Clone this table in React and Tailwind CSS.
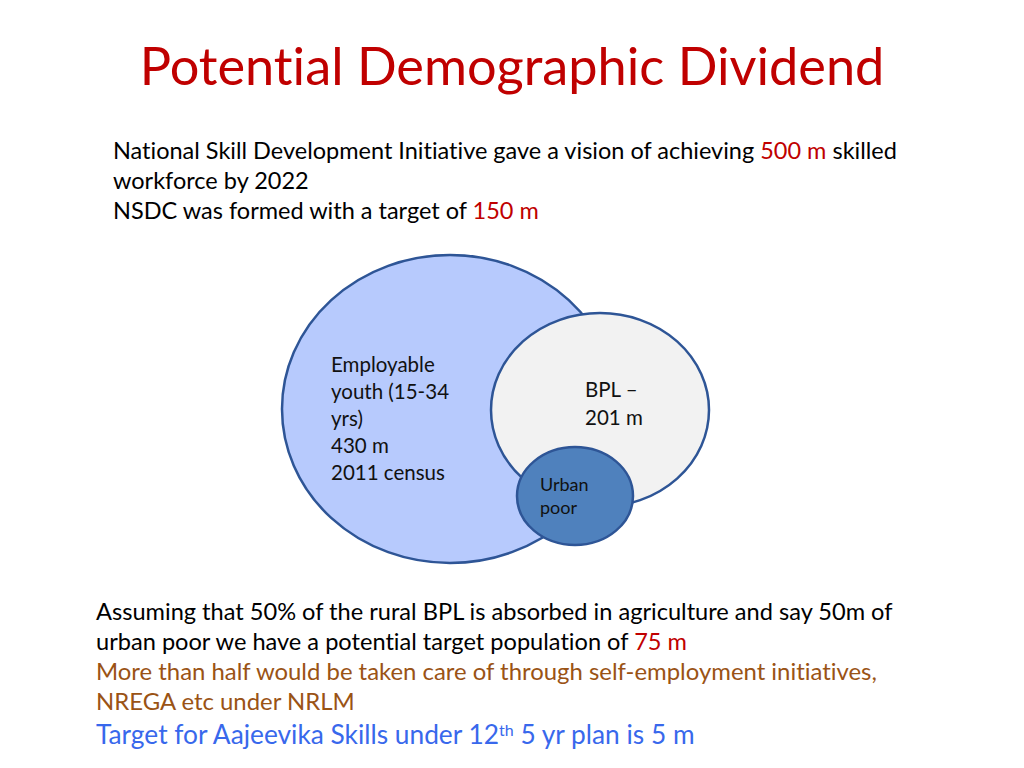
const font = { fontFamily: 'Lato, "Open Sans", sans-serif', fontVariantLigatures: 'none' }

const Venn = () => (
  <svg width="1024" height="371" viewBox="0 0 1024 371" className="block">
    <g stroke="#2E5596" strokeWidth="2.5">
      <ellipse cx="450" cy="184" rx="168" ry="154" fill="#B7CAFD" />
      <ellipse cx="600" cy="185" rx="109" ry="97" fill="#F2F2F2" />
      <ellipse cx="575" cy="271" rx="58" ry="49" fill="#4F81BD" />
    </g>
    <g fill="#111" fontSize="20.5" style={font}>
      <text x="331" y="147">Employable</text>
      <text x="331" y="174">youth (15-34</text>
      <text x="331" y="201">yrs)</text>
      <text x="331" y="228">430 m</text>
      <text x="331" y="255">2011 census</text>
      <text x="585" y="172">BPL –</text>
      <text x="585" y="200">201 m</text>
    </g>
    <g fill="#111" fontSize="18" style={font}>
      <text x="540" y="266">Urban</text>
      <text x="540" y="289">poor</text>
    </g>
  </svg>
)

export default function App() {
  return (
    <div className="w-[1024px] h-[768px] bg-white overflow-hidden" style={font}>
      <h1 className="pt-[30px] text-center text-[52.3px] leading-[70px] text-[#C00000] font-normal">
        Potential Demographic Dividend
      </h1>
      <div className="mt-[35px] pl-[113px] text-[23.5px] leading-[30px] text-black">
        National Skill Development Initiative gave a vision of achieving{' '}
        <span className="text-[#C00000]">500 m</span> skilled
        <br />
        workforce by 2022
        <br />
        NSDC was formed with a target of <span className="text-[#C00000]">150 m</span>
      </div>
      <Venn />
      <div className="pl-[96px] text-[23.6px] leading-[30px]">
        <p className="text-black">
          Assuming that 50% of the rural BPL is absorbed in agriculture and say 50m of
          <br />
          urban poor we have a potential target population of{' '}
          <span className="text-[#C00000]">75 m</span>
        </p>
        <p className="text-[23.9px] text-[#9A5315]">
          More than half would be taken care of through self-employment initiatives,
          <br />
          NREGA etc under NRLM
        </p>
        <p className="text-[26.3px] leading-[36px] text-[#3868EC]">
          Target for Aajeevika Skills under 12<sup className="text-[16px]">th</sup> 5 yr plan is 5 m
        </p>
      </div>
    </div>
  )
}
